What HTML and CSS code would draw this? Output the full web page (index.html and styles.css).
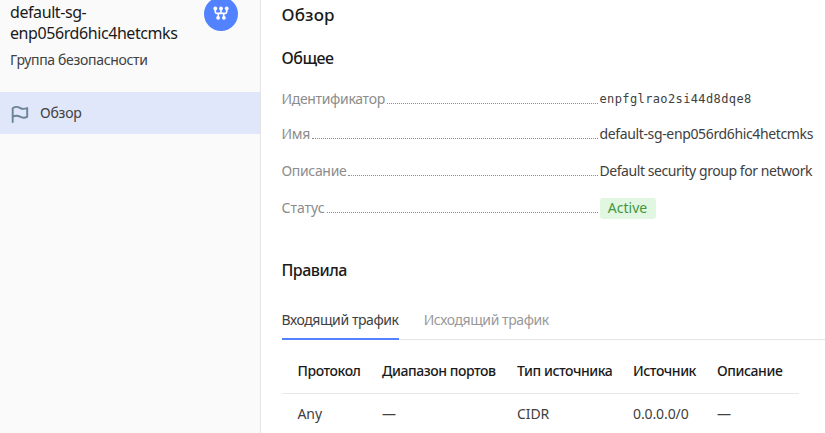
FILE: index.html
```html
<!DOCTYPE html>
<html lang="ru">
<head>
<meta charset="utf-8">
<title>Обзор</title>
<link rel="stylesheet" href="styles.css">
</head>
<body>
<aside class="sidebar">
  <header class="resource">
    <div class="resource-text">
      <div class="resource-name">default-sg-<br>enp056rd6hic4hetcmks</div>
      <div class="resource-type">Группа безопасности</div>
    </div>
    <svg class="badge" viewBox="0 0 34 34">
      <circle cx="17" cy="17" r="17" fill="#5282ff"/>
      <path d="M11.3 11.2v3.9q0 1.3 1.3 1.3h8.8q1.3 0 1.3-1.3v-3.9M17 11.2v5.2M14.3 16.4V21M19.7 16.4V21" fill="none" stroke="#fff" stroke-width="1.6"/>
      <g fill="#fff"><circle cx="11.3" cy="11.5" r="1.9"/><circle cx="17" cy="11.5" r="1.9"/><circle cx="22.7" cy="11.5" r="1.9"/><circle cx="14.1" cy="20.8" r="1.9"/><circle cx="19.9" cy="20.8" r="1.9"/></g>
    </svg>
  </header>
  <nav class="nav-item">
    <svg class="flag" viewBox="0 0 18 18"><path d="M1.7 17V3.2Q5.2.8 8.8 2.8T16.2 3v8.8q-3.6 1.8-7.2-.1t-7.3 0" fill="none" stroke="#6b8497" stroke-width="1.9" stroke-linejoin="round" stroke-linecap="round"/></svg>
    <span>Обзор</span>
  </nav>
</aside>
<main class="content">
  <h1 class="title">Обзор</h1>
  <h2 class="section">Общее</h2>
  <dl class="info">
    <div class="row first"><dt>Идентификатор</dt><dd class="mono">enpfglrao2si44d8dqe8</dd></div>
    <div class="row"><dt>Имя</dt><dd class="name">default-sg-enp056rd6hic4hetcmks</dd></div>
    <div class="row"><dt>Описание</dt><dd class="desc">Default security group for network</dd></div>
    <div class="row last"><dt>Статус</dt><dd><span class="status">Active</span></dd></div>
  </dl>
  <h2 class="section rules">Правила</h2>
  <div class="tabs">
    <div class="tab active">Входящий трафик</div>
    <div class="tab">Исходящий трафик</div>
  </div>
  <div class="table">
    <div class="tr th"><span>Протокол</span><span>Диапазон портов</span><span>Тип источника</span><span>Источник</span><span>Описание</span></div>
    <div class="tr"><span>Any</span><span>—</span><span>CIDR</span><span>0.0.0.0/0</span><span>—</span></div>
  </div>
</main>
</body>
</html>
```
FILE: styles.css
```css
* { box-sizing: border-box; }
body {
  margin: 0;
  height: 433px;
  display: flex;
  overflow: hidden;
  background: #fff;
  color: #404040;
  font: 14px/20px "Noto Sans", sans-serif;
  white-space: nowrap;
}
.sidebar { width: 261px; flex: none; background: #fafafa; border-right: 1px solid #e5e5e5; }
.resource { display: flex; height: 92px; padding-left: 10px; }
.resource-text { width: 194px; padding-top: 2px; }
.resource-name { font-size: 16px; line-height: 21px; color: #1a1a1a; letter-spacing: -0.42px; }
.resource-type { margin-top: 6px; letter-spacing: -0.32px; }
.badge { width: 34px; height: 34px; margin-top: -3px; }
.nav-item { display: flex; align-items: center; height: 42px; padding-left: 11px; gap: 11px; background: #e1e7fb; letter-spacing: -0.2px; }
.flag { width: 18px; height: 18px; margin-top: 2px; }
.content { flex: 1; min-width: 0; padding-left: 21px; }
.title, .section { margin: 0 0 0 -0.5px; color: #1a1a1a; font-weight: 500; }
.title { font-size: 17px; line-height: 24px; padding-top: 3px; letter-spacing: 0.15px; }
.section { font-size: 16px; line-height: 22px; margin-top: 20px; letter-spacing: -0.5px; }
.info { margin: 19px 0 0 -0.5px; width: 540px; }
.row { display: grid; grid-template-columns: 318px 1fr; height: 36.5px; }
.first { height: 36px; padding-top: 1px; }
.last { padding-top: 1px; }
.last dt { letter-spacing: 0; }
dt { display: flex; color: #8c8c8c; letter-spacing: -0.33px; }
dt::after { content: ""; flex: 1; height: 14px; margin: 0 2px; border-bottom: 1px dotted #8c8c8c; }
dd { margin: 0; }
.mono { font-family: "DejaVu Sans Mono", monospace; font-size: 12px; letter-spacing: 0.38px; }
.name { letter-spacing: -0.36px; }
.desc { letter-spacing: -0.44px; }
.status { display: block; width: 56px; height: 21px; border-radius: 3px; background: #e1f7e1; color: #43963f; text-align: center; }
.rules { margin-top: 25.5px; }
.tabs { display: flex; gap: 25px; height: 31px; margin: 28px 0 0 -0.5px; border-bottom: 1px solid #e5e5e5; }
.tab { height: 31px; padding-top: 1px; color: #999; letter-spacing: -0.42px; }
.active { color: #404040; border-bottom: 2px solid #5282ff; }
.table { width: 517px; }
.tr { display: grid; grid-template-columns: 84.5px 135px 116px 84px 1fr; height: 43px; padding: 10px 0 0 15.5px; letter-spacing: -0.1px; }
.th { height: 54px; padding-top: 21px; font-weight: 500; color: #1a1a1a; border-bottom: 1px solid #e8e8e8; letter-spacing: -0.44px; }
```
